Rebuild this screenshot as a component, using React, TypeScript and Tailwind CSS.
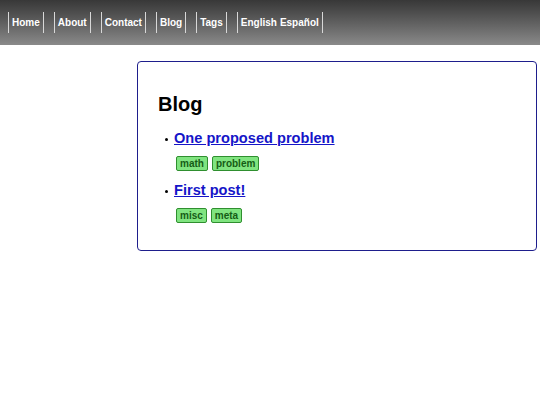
import React from "react";

const navLinks = ["Home", "About", "Contact", "Blog", "Tags"];

function Tag({ label }: { label: string }) {
  return (
    <span className="inline-flex items-center h-[15px] px-[3px] border border-[#2f8f2f] bg-[#80e480] rounded-[2px] text-[10px] font-bold leading-none text-[#155c15]">
      {label}
    </span>
  );
}

function Post({ title, tags }: { title: string; tags: string[] }) {
  return (
    <li className="flex flex-col">
      <div className="flex items-center">
        <span className="w-[3px] h-[3px] bg-black rounded-full ml-[7px] mr-[6px] mt-[2px]" />
        <a href="#" className="text-[14.6px] leading-[18px] font-bold text-[#1515c8] underline">
          {title}
        </a>
      </div>
      <div className="flex gap-[4px] ml-[18px] mt-[9px]">
        {tags.map((t) => (
          <Tag key={t} label={t} />
        ))}
      </div>
    </li>
  );
}

export default function App() {
  return (
    <div className="min-h-[405px] bg-white" style={{ fontFamily: '"Liberation Sans", Arial, sans-serif' }}>
      <nav className="h-[45px] flex items-center pl-[8px] gap-[10px] bg-gradient-to-b from-[#383838] to-[#8a8a8a]">
        {navLinks.map((l) => (
          <a
            key={l}
            href="#"
            className="h-[21px] flex items-center px-[3px] border-x border-[#d8d8d8] text-white text-[10px] font-bold"
          >
            {l}
          </a>
        ))}
        <div className="h-[21px] flex items-center gap-[3px] px-[3px] border-x border-[#d8d8d8] text-white text-[10px] font-bold">
          <a href="#">English</a>
          <a href="#">Español</a>
        </div>
      </nav>
      <div className="ml-[137px] mt-[16px] w-[400px] h-[190px] border-[1.5px] border-[#1e1e8c] rounded-[4px] pl-[20px] pt-[30px]">
        <h2 className="text-[20px] leading-[24px] font-bold text-black">Blog</h2>
        <ul className="mt-[13px] flex flex-col gap-[10px]">
          <Post title="One proposed problem" tags={["math", "problem"]} />
          <Post title="First post!" tags={["misc", "meta"]} />
        </ul>
      </div>
    </div>
  );
}
